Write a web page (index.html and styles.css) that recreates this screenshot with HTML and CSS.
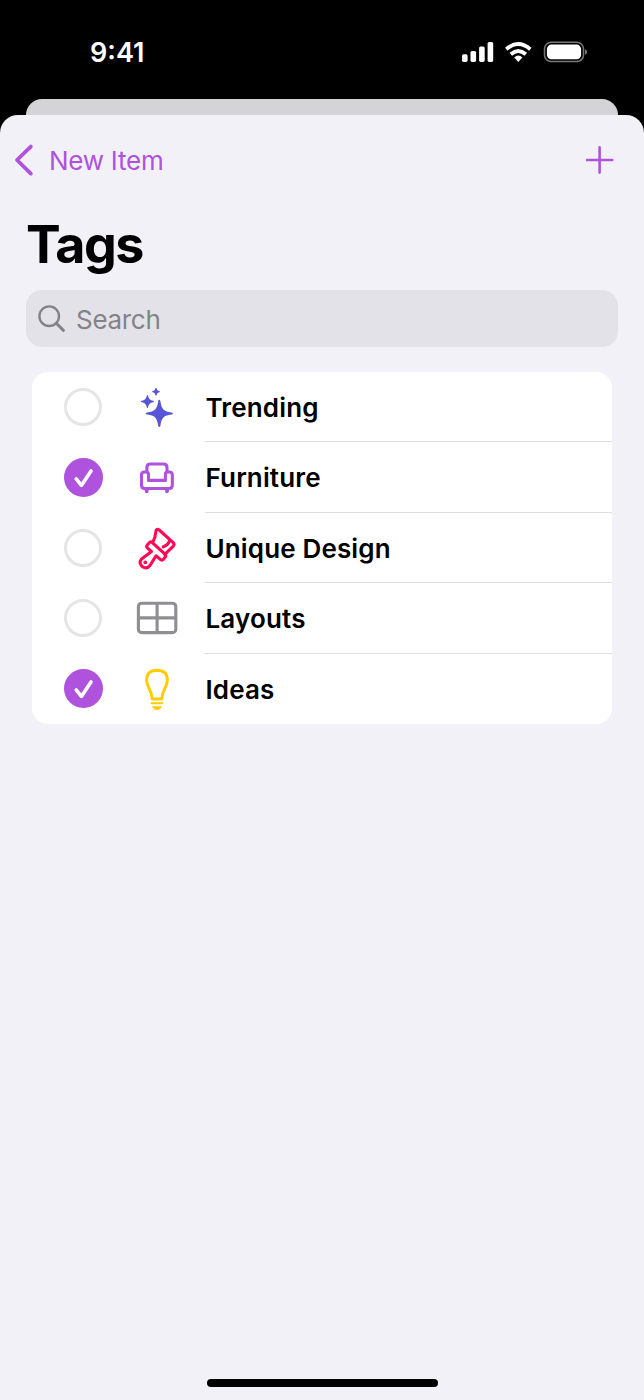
FILE: index.html
```
<!DOCTYPE html>
<html lang="en">
  <head>
    <meta charset="utf-8">
    <title>Tags</title>
    <link rel="stylesheet" href="styles.css">
  </head>
  <body>
    <div class="statusbar">
      <span class="time">9:41</span>
      <svg class="status-icons" width="128" height="24" viewBox="0 0 128 24">
        <g fill="#fff">
          <rect x="2" y="14.3" width="5.6" height="7.6" rx="1.6"/>
          <rect x="10.5" y="11" width="5.6" height="10.9" rx="1.6"/>
          <rect x="19.1" y="6.5" width="5.6" height="15.4" rx="1.6"/>
          <rect x="27.6" y="2" width="5.6" height="19.9" rx="1.6"/>
          <path d="M54.2 17.4 Q58.3 13.8 62.4 17.4 L58.3 21.9Z"/>
        </g>
        <g fill="none" stroke="#fff" stroke-width="3.9">
          <path d="M46.3 9.2 Q58.3 -1.2 70.3 9.2"/>
          <path d="M50.8 14.2 Q58.3 7.9 65.8 14.2"/>
        </g>
        <rect x="84.5" y="2.3" width="39" height="19.2" rx="6.5" fill="none" stroke="#777" stroke-width="1.5"/>
        <rect x="86.9" y="4.6" width="34.2" height="14.6" rx="4.5" fill="#fff"/>
        <path d="M125 9.2 Q127.2 9.8 127.2 12 Q127.2 14.2 125 14.8Z" fill="#777"/>
      </svg>
    </div>
    <div class="sheet-behind"></div>
    <main class="sheet">
      <nav>
        <a class="back">
          <svg width="20" height="34" viewBox="0 0 20 34"><path d="M16.8 3.6 L3 17 L16.8 30.6"/></svg>
          <span>New Item</span>
        </a>
        <svg class="add" width="28" height="28" viewBox="0 0 28 28"><path d="M13.6 1.4 V26.6 M1 14 H26.2"/></svg>
      </nav>
      <h1>Tags</h1>
      <div class="search">
        <svg width="28" height="28" viewBox="0 0 28 28"><circle cx="11.2" cy="11.2" r="9.8"/><path d="M18.3 18.3 L25.4 25.4" stroke-width="2.9"/></svg>
        <span>Search</span>
      </div>
      <ul class="tags">
        <li>
          <span class="check"></span>
          <svg class="icon" viewBox="0 0 44 48" fill="#5856d6">
            <path d="M24.3 16.8 Q25.2 16.8 25.4 18.2 C26.6 26.2 28.6 28.4 36.6 29.4 Q38 29.6 38 30.5 Q38 31.4 36.6 31.6 C28.6 32.6 26.6 34.8 25.4 42.8 Q25.2 44.1 24.3 44.1 Q23.4 44.1 23.2 42.8 C22 34.8 20 32.6 12 31.6 Q10.7 31.4 10.7 30.5 Q10.7 29.6 12 29.4 C20 28.4 22 26.2 23.2 18.2 Q23.4 16.8 24.3 16.8Z"/>
            <path d="M12.4 12 Q12.9 12 13.1 13 Q13.8 17.2 18 17.8 Q19 18 19 18.5 Q19 19 18 19.2 Q13.8 19.8 13.1 24 Q12.9 25 12.4 25 Q11.9 25 11.7 24 Q11 19.8 6.8 19.2 Q5.8 19 5.8 18.5 Q5.8 18 6.8 17.8 Q11 17.2 11.7 13 Q11.9 12 12.4 12Z"/>
            <path d="M21 4.7 Q21.4 4.7 21.6 5.5 Q22 7.8 24.3 8.2 Q25.1 8.3 25.1 8.7 Q25.1 9.1 24.3 9.2 Q22 9.6 21.6 11.9 Q21.4 12.7 21 12.7 Q20.6 12.7 20.4 11.9 Q20 9.6 17.7 9.2 Q16.9 9.1 16.9 8.7 Q16.9 8.3 17.7 8.2 Q20 7.8 20.4 5.5 Q20.6 4.7 21 4.7Z"/>
          </svg>
          <span class="label">Trending</span>
        </li>
        <li>
          <span class="check on"><svg viewBox="0 0 39 39"><path d="M12.2 20.8 L17.4 27.4 L27 13"/></svg></span>
          <svg class="icon" viewBox="0 0 44 48" fill="none" stroke="#af52de" stroke-width="3.1" stroke-linejoin="round">
            <path d="M11.9 17.4 V13.4 Q11.9 10 15.3 10 H28.6 Q32 10 32 13.4 V17.4"/>
            <path d="M13.5 26.4 H30.4 V20.4 Q30.4 18 32.8 18 H34.3 Q37.3 18 37.3 21 V31.2 Q37.3 34.5 34 34.5 H9.8 Q6.5 34.5 6.5 31.2 V21 Q6.5 18 9.5 18 H11 Q13.5 18 13.5 20.4Z"/>
            <path d="M11.7 35 V37.3 M32 35 V37.3" stroke-width="3.8" stroke-linecap="round"/>
          </svg>
          <span class="label">Furniture</span>
        </li>
        <li>
          <span class="check"></span>
          <svg class="icon" viewBox="0 0 44 48" fill="none" stroke="#ff0a54" stroke-width="3.1" stroke-linejoin="round" stroke-linecap="round">
            <path d="M17.7 18.2 Q20.6 13.5 20.7 8.3 Q21 4 24.2 6 L38.2 18.6 Q39.8 20.5 38.3 22.2 L29.8 30.4"/>
            <path d="M28.3 22.8 Q34 20.5 34.6 16.2"/>
            <path d="M17 18.3 L30 30.2 Q31.4 31.8 29.9 33.4 L28.5 35.3 Q27.2 36.8 25.6 35.6 L21 31.8 L15.2 41.3 Q12.2 45.3 7.8 43 Q3 39.2 6.5 35 L16.5 27.6 L12.6 24.1 Q11 22.6 12.3 21 L14.2 18.8 Q15.5 17.2 17 18.3Z"/>
            <circle cx="10.3" cy="38.4" r="1.9" fill="#ff0a54" stroke="none"/>
          </svg>
          <span class="label">Unique Design</span>
        </li>
        <li>
          <span class="check"></span>
          <svg class="icon" viewBox="0 0 44 48" fill="none" stroke="#8e8e93" stroke-width="3.1">
            <rect x="3.4" y="9.2" width="37.4" height="29.4" rx="3.4"/>
            <path d="M22.1 9.2 V38.6 M3.4 23.9 H40.8"/>
          </svg>
          <span class="label">Layouts</span>
        </li>
        <li>
          <span class="check on"><svg viewBox="0 0 39 39"><path d="M12.2 20.8 L17.4 27.4 L27 13"/></svg></span>
          <svg class="icon" viewBox="0 0 44 48" fill="none" stroke="#ffcc00" stroke-width="2.9" stroke-linejoin="round">
            <path d="M17.2 34 Q17.1 28.8 13.8 22.8 Q11.6 18.8 11.6 14.8 Q11.8 5.5 22 5.3 Q32.2 5.5 32.4 14.8 Q32.4 18.8 30.2 22.8 Q26.9 28.8 26.8 34Z"/>
            <path d="M16.6 38.2 H27.4" stroke-width="2" stroke-linecap="round"/>
            <path d="M17 41.2 H27 Q25.5 44.9 22 44.9 Q18.5 44.9 17 41.2Z" fill="#ffcc00" stroke="none"/>
          </svg>
          <span class="label">Ideas</span>
        </li>
      </ul>
      <div class="home-bar"></div>
    </main>
  </body>
</html>
```

FILE: styles.css
```
* {
  box-sizing: border-box;
}
body {
  margin: 0;
  height: 1400px;
  display: flex;
  flex-direction: column;
  background-color: #000;
  font-family: Inter, "Liberation Sans", sans-serif;
  font-size: 26px;
  overflow: hidden;
}
.statusbar {
  height: 99px;
  padding: 40px 56px 0 90px;
  display: flex;
  justify-content: space-between;
  color: #fff;
}
.time {
  font-size: 27px;
  font-weight: 600;
  line-height: 26px;
}
.sheet-behind {
  height: 16px;
  margin: 0 26px;
  border-radius: 16px 16px 0 0;
  background-color: #d4d3d8;
}
.sheet {
  flex: 1;
  display: flex;
  flex-direction: column;
  border-radius: 18px 18px 0 0;
  background-color: #f2f1f7;
}
nav {
  height: 90px;
  padding: 0 30px 0 14px;
  display: flex;
  justify-content: space-between;
  align-items: center;
  color: #af52de;
}
.back {
  display: flex;
  align-items: center;
  gap: 15px;
  letter-spacing: -0.25px;
}
nav svg {
  fill: none;
  stroke: #af52de;
  stroke-width: 3.8;
  stroke-linecap: round;
  stroke-linejoin: round;
}
nav .add {
  stroke-width: 2.6;
}
h1 {
  margin: 8px 26px 0;
  height: 77px;
  font-size: 52px;
  line-height: 63px;
  font-weight: 700;
  letter-spacing: -1.6px;
}
.search {
  height: 57px;
  margin: 0 26px;
  padding: 0 12px;
  display: flex;
  align-items: center;
  gap: 10px;
  border-radius: 16px;
  background-color: #e3e2e8;
  color: #838289;
  letter-spacing: -0.3px;
}
.search span {
  padding-top: 2px;
}
.search svg {
  fill: none;
  stroke: #838289;
  stroke-width: 2.4;
  stroke-linecap: round;
}
.tags {
  list-style: none;
  margin: 25px 32px 0;
  padding: 0;
  border-radius: 16px;
  background-color: #fff;
  overflow: hidden;
}
.tags li {
  height: 70.4px;
  display: flex;
  align-items: center;
}
.check {
  width: 38px;
  height: 38px;
  margin: 0 32.5px 0 32px;
  border: 3px solid #e5e5e5;
  border-radius: 50%;
}
.check.on {
  width: 39px;
  height: 39px;
  margin: 0 32px 0 31.5px;
  border: none;
  background-color: #af52de;
}
.check svg {
  display: block;
  fill: none;
  stroke: #fff;
  stroke-width: 3.6;
  stroke-linecap: round;
  stroke-linejoin: round;
}
.icon {
  width: 44px;
  height: 48px;
  margin-right: 26.5px;
}
.label {
  flex: 1;
  height: 100%;
  padding-left: 0.5px;
  line-height: 72.6px;
  font-weight: 600;
  letter-spacing: 0.15px;
  border-bottom: 1px solid #dddddf;
}
li:last-child .label {
  border-bottom: none;
}
.home-bar {
  width: 231px;
  height: 8px;
  margin: auto auto 13px;
  border-radius: 4px;
  background-color: #000;
}
```
